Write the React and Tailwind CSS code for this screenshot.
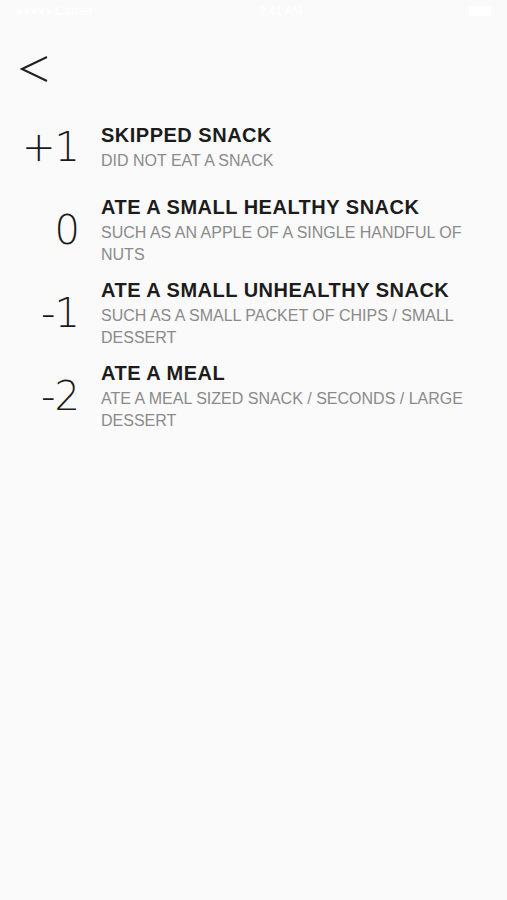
const rows = [
  { score: "+1", title: "SKIPPED SNACK", desc: "DID NOT EAT A SNACK" },
  { score: "0", title: "ATE A SMALL HEALTHY SNACK", desc: "SUCH AS AN APPLE OF A SINGLE HANDFUL OF NUTS" },
  { score: "-1", title: "ATE A SMALL UNHEALTHY SNACK", desc: "SUCH AS A SMALL PACKET OF CHIPS / SMALL DESSERT" },
  { score: "-2", title: "ATE A MEAL", desc: "ATE A MEAL SIZED SNACK / SECONDS / LARGE DESSERT" },
];

function StatusBar() {
  return (
    <div className="h-[22px] flex items-center justify-between px-[16px] text-white text-[12px] font-['Liberation_Sans',sans-serif]">
      <span>●●●●● Carrier</span>
      <span>9:41 AM</span>
      <span className="w-[22px] h-[10px] rounded-[2px] bg-white" />
    </div>
  );
}

export default function App() {
  return (
    <div className="min-h-[900px] bg-[#fafafa] font-['Liberation_Sans',sans-serif]">
      <StatusBar />
      <div className="pl-[20px] pt-[32px]">
        <svg width="30" height="30" viewBox="0 0 30 30" fill="none">
          <polyline points="27,3 2,15 27,27" stroke="#222" strokeWidth="2" />
        </svg>
      </div>

      <div className="mt-[27px] flex flex-col gap-[11px]">
        {rows.map((r, i) => (
          <div key={r.title} className={`flex items-center gap-[22px] ${i === 0 ? "min-h-[72px]" : ""}`}>
            <div className="w-[79px] shrink-0 text-right text-[40px] tracking-[-1px] leading-none font-extralight text-[#1a1a1a] font-['DejaVu_Sans',sans-serif]">
              {r.score}
            </div>
            <div className="w-[375px]">
              <div className="text-[20px] leading-[26px] font-bold tracking-[0.5px] text-[#1c1c1c]">{r.title}</div>
              <div className="mt-[2px] text-[16px] leading-[22px] text-[#8a8a8a]">{r.desc}</div>
            </div>
          </div>
        ))}
      </div>
    </div>
  );
}
